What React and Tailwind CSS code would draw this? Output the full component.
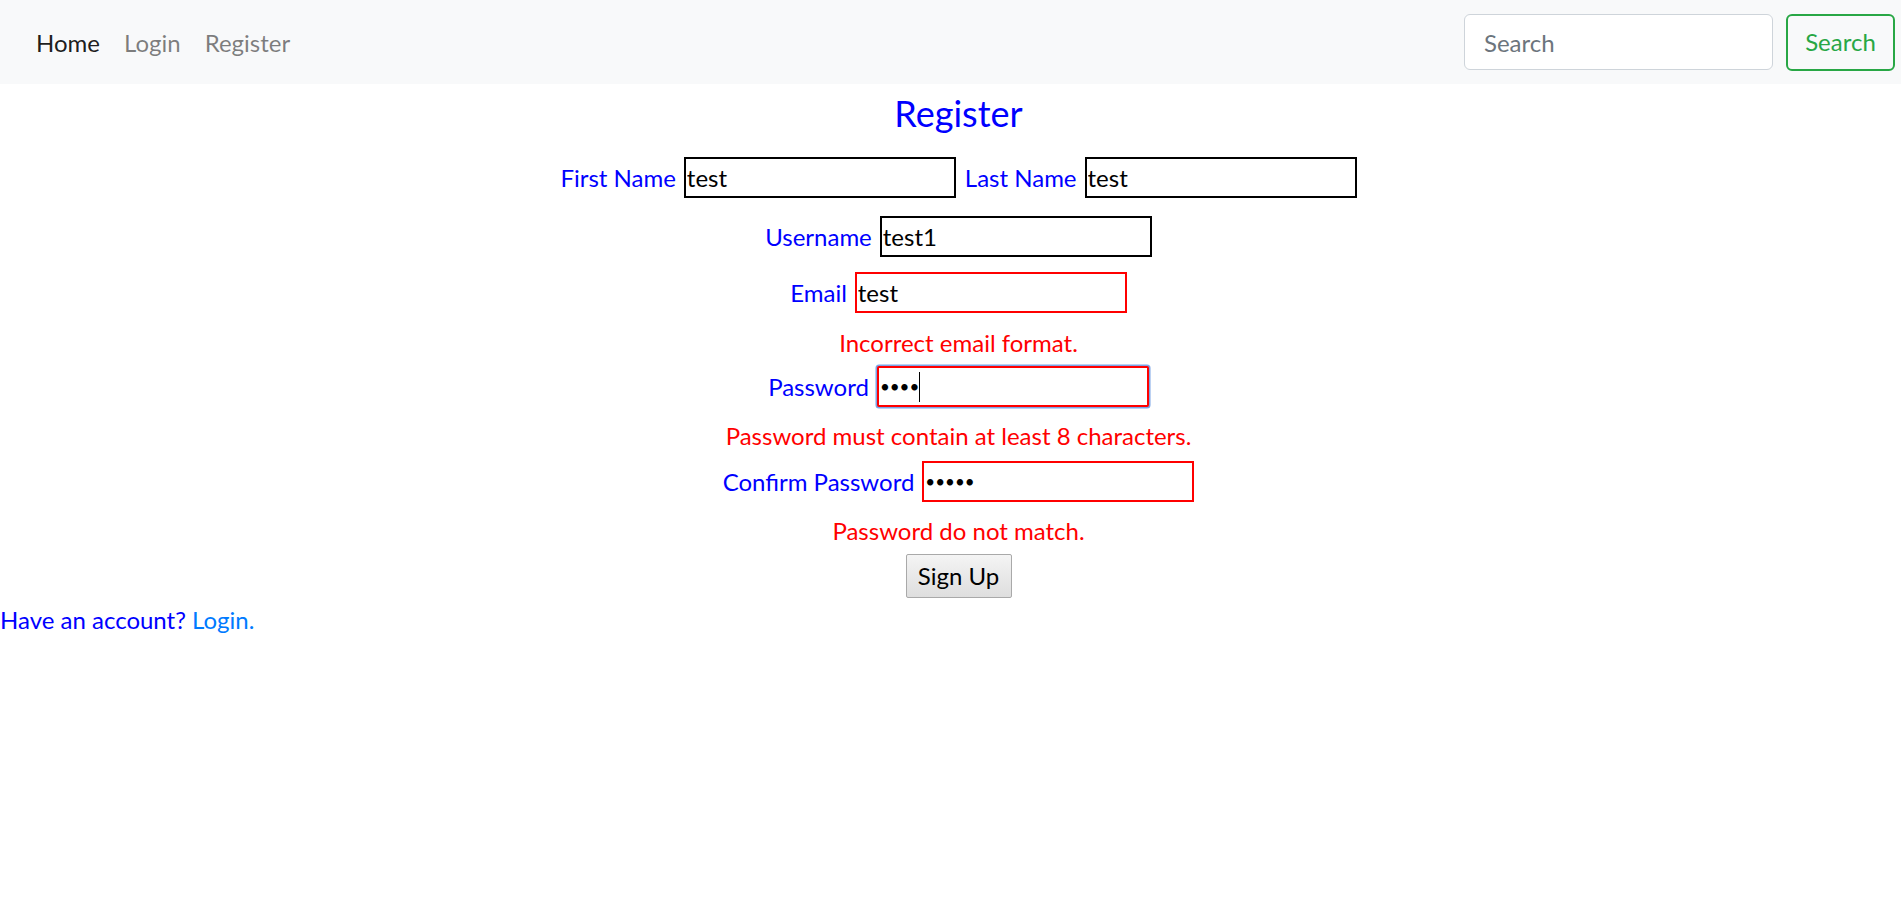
import React from 'react';

const font = { fontFamily: '"Lato", "Liberation Sans", sans-serif' };

const toneClass = {
    normal: 'border-black',
    error: 'border-[#ff0000]',
    focus: 'border-[#ff0000] rounded-[2px] shadow-[0_0_0_1.5px_#7ba4e6]',
};

const Field = ({ label, value, type = 'text', tone = 'normal', caret = false }) => {
    const size = type === 'password' ? 'text-[17px] pl-[1px]' : 'text-[24px] px-[1px]';
    return (
        <div className="flex items-center gap-[8px]">
            <label className="text-[24px] text-[#0000ff] leading-none whitespace-nowrap">{label}</label>
            <div className="relative">
                <input
                    readOnly
                    type={type}
                    value={value}
                    className={`block w-[272px] h-[41px] border-2 bg-white text-black outline-none ${size} ${toneClass[tone]}`}
                    style={font}
                />
                {caret && <span className="absolute left-[42px] top-[6px] w-px h-[30px] bg-black" />}
            </div>
        </div>
    );
};

const ErrorText = ({ children }) => (
    <p className="text-[24px] leading-[36px] text-[#ff0000] text-center">{children}</p>
);

export default function App() {
    return (
        <div className="min-h-screen bg-white" style={font}>
            {/* Navbar */}
            <nav className="h-[84px] bg-[#f8f9fa] flex items-center justify-between pl-[24px] pr-[6px]">
                <ul className="flex items-center text-[24px] pt-[2px]">
                    <li className="px-[12px] text-black/90">Home</li>
                    <li className="px-[12px] text-black/50">Login</li>
                    <li className="px-[12px] text-black/50">Register</li>
                </ul>
                <form className="flex items-center gap-[13px]">
                    <input
                        placeholder="Search"
                        className="w-[309px] h-[56px] rounded-[6px] border-[1.5px] border-[#ced4da] bg-white pl-[19px] text-[24px] placeholder:text-[#6c757d] outline-none"
                        style={font}
                    />
                    <button
                        type="button"
                        className="w-[109px] h-[57px] rounded-[6px] border-2 border-[#28a745] text-[24px] text-[#28a745]"
                    >
                        Search
                    </button>
                </form>
            </nav>

            {/* Register form */}
            <div className="pl-[16px] flex flex-col items-center">
                <h2 className="mt-[7px] text-[36px] leading-[44px] text-[#0000ff]">Register</h2>

                <div className="mt-[22px] flex items-center gap-[9px]">
                    <Field label="First Name" value="test" />
                    <Field label="Last Name" value="test" />
                </div>
                <div className="mt-[18px]">
                    <Field label="Username" value="test1" />
                </div>
                <div className="mt-[15px]">
                    <Field label="Email" value="test" tone="error" />
                </div>
                <div className="mt-[12px]">
                    <ErrorText>Incorrect email format.</ErrorText>
                </div>
                <div className="mt-[5px]">
                    <Field label="Password" value="test" type="password" tone="focus" caret />
                </div>
                <div className="mt-[11px]">
                    <ErrorText>Password must contain at least 8 characters.</ErrorText>
                </div>
                <div className="mt-[7px]">
                    <Field label="Confirm Password" value="tests" type="password" tone="error" />
                </div>
                <div className="mt-[11px]">
                    <ErrorText>Password do not match.</ErrorText>
                </div>
                <button
                    type="button"
                    className="mt-[5px] w-[106px] h-[44px] rounded-[2px] border-[1.5px] border-[#a9a9a9] bg-gradient-to-b from-[#f4f4f4] to-[#dedede] text-[24px] text-black"
                >
                    Sign Up
                </button>
            </div>

            <p className="mt-[4px] text-[24px] leading-[36px] text-[#0000ff]">
                Have an account? <a className="text-[#007bff]">Login.</a>
            </p>
        </div>
    );
}
